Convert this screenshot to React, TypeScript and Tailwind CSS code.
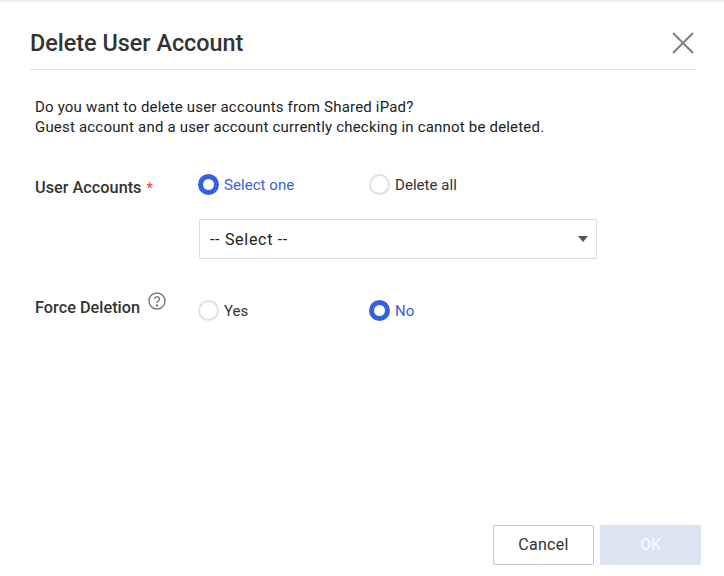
import React from "react";

const Radio = ({ label, checked }: { label: string; checked?: boolean }) => (
  <label className="flex h-[21px] w-[171px] items-start gap-[5px]">
    {checked ? (
      <span className="h-[21px] w-[21px] rounded-full border-[5px] border-[#3560e6] bg-white" />
    ) : (
      <span className="h-[21px] w-[21px] rounded-full border-2 border-[#dfe0e8] bg-white" />
    )}
    <span className={checked ? "text-[15px] leading-[23px] tracking-[0.05px] text-[#3560e6]" : "text-[15px] leading-[23px] tracking-[0.05px] text-[#333333]"}>
      {label}
    </span>
  </label>
);

const App = () => {
  return (
    <div className="flex h-[576px] w-[724px] flex-col border-t-2 border-[#ececf0] bg-white font-['Roboto',sans-serif] text-[#222222]">
      <header className="ml-[30px] mr-[28px] flex h-[68px] items-end justify-between border-b border-[#dfdfe6] pb-[12px] pr-[2px]">
        <h1 className="text-[23.4px] font-medium leading-[28px] text-[#333333]">Delete User Account</h1>
        <button aria-label="Close" className="mb-[3px]">
          <svg className="block" width="22" height="22" viewBox="0 0 22 22" fill="none" stroke="#808080" strokeWidth="2">
            <path d="M1 1 L21 21 M21 1 L1 21" />
          </svg>
        </button>
      </header>

      <main className="flex-1 px-[35px] pt-[27px]">
        <p className="text-[15px] leading-[20px] tracking-[0.19px]">
          Do you want to delete user accounts from Shared iPad?
          <br />
          Guest account and a user account currently checking in cannot be deleted.
        </p>

        <div className="mt-[37px] flex">
          <div className="w-[163px] pt-[2px] text-[16.3px] font-medium text-[#333333]">
            User Accounts <span className="ml-[1px] text-[14px] text-[#f04444]">*</span>
          </div>
          <div className="flex-1">
            <div className="flex">
              <Radio label="Select one" checked />
              <Radio label="Delete all" />
            </div>
            <div className="ml-[1px] mt-[24px] flex h-[40px] w-[398px] items-center justify-between border border-[#dcdce4] pl-[10px] pr-[8px] text-[16px] tracking-[0.7px] text-[#222222]">
              <span className="pt-[1px]">-- Select --</span>
              <svg width="10" height="6" viewBox="0 0 10 6" fill="#555555">
                <path d="M0 0 H10 L5 6 Z" />
              </svg>
            </div>
          </div>
        </div>

        <div className="mt-[41px] flex">
          <div className="-mt-[4px] flex w-[163px] items-start gap-[8px] text-[16.3px] font-medium text-[#333333]">
            <span>Force Deletion</span>
            <svg className="-mt-[4px]" width="18" height="18" viewBox="0 0 18 18" fill="none" stroke="#777777" strokeWidth="1.4">
              <circle cx="9" cy="9" r="8" />
              <path d="M6.6 7 A2.4 2.4 0 1 1 10.4 9 C9.4 9.6 9 10 9 11" />
              <circle cx="9" cy="13.4" r="0.5" fill="#777777" />
            </svg>
          </div>
          <div className="flex">
            <Radio label="Yes" />
            <Radio label="No" checked />
          </div>
        </div>
      </main>

      <footer className="flex justify-end gap-[6px] pb-[11px] pr-[23px]">
        <button className="h-[40px] w-[101px] rounded-[2px] border border-[#c8c8c8] bg-white text-[16px] tracking-[0.3px] text-[#333333]">
          Cancel
        </button>
        <button className="h-[40px] w-[101px] rounded-[2px] bg-[#dbe4f0] text-[16px] font-medium text-[#f4f7fb]">
          OK
        </button>
      </footer>
    </div>
  );
};

export default App;
